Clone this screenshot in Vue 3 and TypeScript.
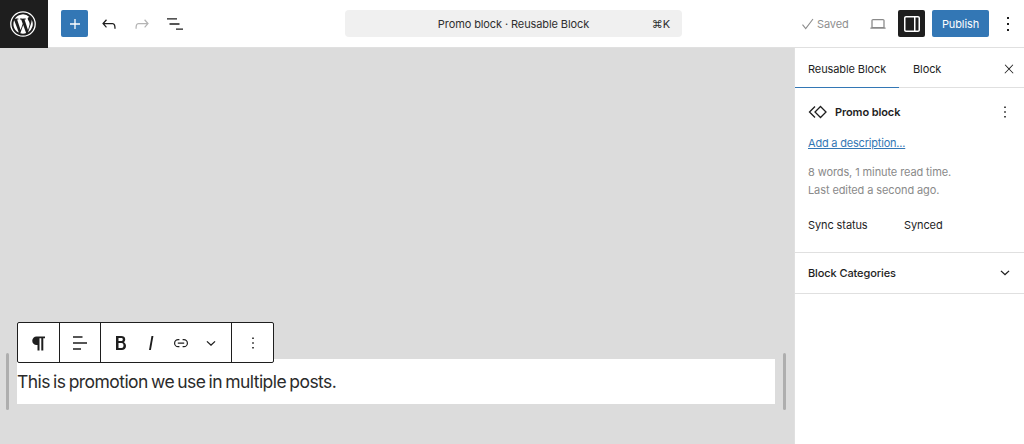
<script setup lang="ts">
const meta: string[] = ['8 words, 1 minute read time.', 'Last edited a second ago.']
</script>

<template>
  <div class="app">
    <header class="top">
      <div class="logo">
        <svg width="28" height="28" viewBox="0 0 28 28">
          <circle cx="14" cy="14" r="12.2" fill="none" stroke="#fff" stroke-width="1.3" />
          <path fill="#fff" d="M4.4 14c0 3.8 2.2 7.1 5.4 8.6L5.2 10.2A9.6 9.6 0 0 0 4.4 14zm16.1-.5c0-1.2-.4-2-.8-2.6-.5-.8-1-1.5-1-2.3 0-.9.7-1.7 1.6-1.7h.1A9.6 9.6 0 0 0 5.9 8.7h.6c1 0 2.6-.1 2.6-.1.5 0 .6.7.1.8 0 0-.5.1-1.1.1l3.5 10.5 2.1-6.3-1.5-4.2c-.5 0-1-.1-1-.1-.5 0-.5-.8.1-.8 0 0 1.6.1 2.6.1s2.6-.1 2.6-.1c.5 0 .6.7.1.8 0 0-.5.1-1.1.1l3.5 10.4 1-3.2c.4-1.3.7-2.3.7-3.1zM14.2 14.9l-2.9 8.4a9.6 9.6 0 0 0 5.9-.2l-.1-.1-2.9-8.1zm8.3-5.5c0 .3.1.7.1 1 0 1-.2 2.1-.7 3.5l-2.9 8.5a9.6 9.6 0 0 0 3.5-13z" />
        </svg>
      </div>
      <div class="tools">
        <button class="add" aria-label="Add block">
          <svg width="24" height="24" viewBox="0 0 24 24"><path fill="#fff" d="M11.35 7h1.3v4.35H17v1.3h-4.35V17h-1.3v-4.35H7v-1.3h4.35z" /></svg>
        </button>
        <span class="tool">
          <svg width="24" height="24" viewBox="0 0 24 24"><path fill="#1e1e1e" transform="translate(1.8 1.8) scale(.85)" d="M18.3 11.7c-.6-.6-1.4-.9-2.3-.9H6.7l2.9-3.3-1.1-1-4.5 5L8.5 16.5l1-1-2.7-3.2H16c.5 0 .9.2 1.3.5 1 1 1 3.4 1 4.5v.3h1.5v-.2c0-1.5 0-4.3-1.5-5.7z" /></svg>
        </span>
        <span class="tool">
          <svg width="24" height="24" viewBox="0 0 24 24"><path fill="#b4b4b4" transform="translate(1.8 1.8) scale(.85)" d="M15.6 6.5l-1.1 1 2.9 3.3H8c-.9 0-1.7.3-2.3.9-1.4 1.5-1.4 4.2-1.4 5.6v.2h1.5v-.3c0-1.1 0-3.5 1-4.5.3-.3.7-.5 1.3-.5h9.2l-2.7 3.2 1 1 4.4-5-4.4-4.9z" /></svg>
        </span>
        <span class="tool">
          <svg width="24" height="24" viewBox="0 0 24 24"><path fill="#1e1e1e" d="M4 6.25h10v1.3H4zM6.5 11.35h10v1.3h-10zM13 16.45h7v1.3h-7z" /></svg>
        </span>
      </div>
      <div class="center">
        <div class="command">
          <span class="cmd-title">Promo block · Reusable Block</span>
          <span class="cmd-key">⌘K</span>
        </div>
      </div>
      <div class="actions">
        <span class="saved">
          <svg width="16" height="16" viewBox="0 0 16 16"><path fill="none" stroke="#8c8c8c" stroke-width="1.1" d="M2.5 8.7l3.2 3.8 7.3-9.5" /></svg>
          Saved
        </span>
        <span class="view">
          <svg width="24" height="24" viewBox="0 0 24 24"><path fill="#8a8a8a" transform="translate(1.8 1.8) scale(.85)" d="M20.5 16h-.7V8c0-1.1-.9-2-2-2H6.2c-1.1 0-2 .9-2 2v8h-.7c-.4 0-.7.3-.7.7s.3.8.7.8h17c.4 0 .7-.3.7-.8s-.3-.7-.7-.7zM5.700 8c0-.3.2-.5.5-.5h11.600c.3 0 .5.2.5.5v7.600H5.700V8z" /></svg>
        </span>
        <button class="panel" aria-label="Settings">
          <svg width="24" height="24" viewBox="0 0 24 24"><path fill="#fff" d="M18 4H6c-1.1 0-2 .9-2 2v12c0 1.1.9 2 2 2h12c1.1 0 2-.9 2-2V6c0-1.1-.9-2-2-2zM5.500 18V6c0-.3.2-.5.5-.5h8v13H6c-.3 0-.5-.2-.5-.5zm13 0c0 .3-.2.5-.5.5h-2.500v-13H18c.3 0 .5.2.5.5v12z" /></svg>
        </button>
        <button class="publish">Publish</button>
        <span class="more">
          <svg width="24" height="24" viewBox="0 0 24 24"><path fill="#1e1e1e" d="M13 19h-2v-2h2zm0-6h-2v-2h2zm0-6h-2V5h2z" /></svg>
        </span>
      </div>
    </header>

    <div class="body">
      <main class="canvas">
        <div class="block-wrap">
          <span class="handle"></span>
          <div class="block">
            <p class="para">This is promotion we use in multiple posts.</p>
            <div class="toolbar">
              <span class="group single">
                <svg width="24" height="24" viewBox="0 0 24 24"><path fill="#1e1e1e" d="M18 5.500H9.500a4.250 4.250 0 0 0 0 8.500h1v5.500h2V7.300h1.800v12.200h2V7.300H18z" /></svg>
              </span>
              <span class="group single">
                <svg width="24" height="24" viewBox="0 0 24 24"><path fill="#1e1e1e" d="M5 5.350h9.500v1.300H5zM5 11.350h14v1.300H5zM5 17.350h8v1.300H5z" /></svg>
              </span>
              <span class="group format">
                <svg width="24" height="24" viewBox="0 0 24 24"><path fill="#1e1e1e" d="M14.700 11.300c1-.6 1.500-1.600 1.500-3 0-2.300-1.700-3.300-4-3.300H7v14h5.800c2.300 0 4.200-1.300 4.200-3.900 0-1.700-.9-3.200-2.300-3.800zM9.500 7h2.500c1.100 0 1.800.4 1.800 1.500S13.100 10 12 10H9.500zm3 10h-3v-5h3c1.300 0 2 .8 2 2.500S13.800 17 12.500 17z" /></svg>
                <svg width="24" height="24" viewBox="0 0 24 24"><path fill="#1e1e1e" d="M12.500 5L10 19h1.900l2.500-14z" /></svg>
                <svg width="24" height="24" viewBox="0 0 24 24"><path fill="#1e1e1e" transform="translate(2.400 2.400) scale(.8)" d="M10 17.389H8.444A5.194 5.194 0 1 1 8.444 7H10v1.500H8.444a3.694 3.694 0 0 0 0 7.389H10zM15.556 7H14v1.500h1.556a3.694 3.694 0 0 1 0 7.389H14v1.500h1.556a5.194 5.194 0 0 0 0-10.389zM8 13h8v-1.500H8z" /></svg>
                <svg width="24" height="24" viewBox="0 0 24 24"><path fill="#1e1e1e" d="M16.500 10.800l-.9-.9-3.600 3.300-3.600-3.300-.9.900 4.500 4.100z" /></svg>
              </span>
              <span class="group last">
                <svg width="24" height="24" viewBox="0 0 24 24"><path fill="#1e1e1e" d="M13 19h-2v-2h2zm0-6h-2v-2h2zm0-6h-2V5h2z" transform="translate(2.400 2.400) scale(.8)" /></svg>
              </span>
            </div>
          </div>
          <span class="handle"></span>
        </div>
      </main>

      <aside class="side">
        <div class="tabs">
          <span class="tab active">Reusable Block</span>
          <span class="tab">Block</span>
          <svg class="close" width="24" height="24" viewBox="0 0 24 24"><path fill="#1e1e1e" transform="translate(4.800 4.800) scale(.6)" d="M13 11.800l6.100-6.300-1-1-6.100 6.200-6.100-6.200-1 1 6.100 6.300-6.500 6.700 1 1 6.500-6.600 6.500 6.600 1-1z" /></svg>
        </div>
        <section class="summary">
          <div class="title-row">
            <svg width="24" height="24" viewBox="0 0 24 24"><path fill="none" stroke="#1e1e1e" stroke-width="1.300" d="M14.500 6.500l5.500 5.500-5.500 5.500L9 12zM9 6.500L3.500 12 9 17.500" /></svg>
            <strong class="title">Promo block</strong>
            <svg class="row-more" width="24" height="24" viewBox="0 0 24 24"><path fill="#1e1e1e" d="M13 19h-2v-2h2zm0-6h-2v-2h2zm0-6h-2V5h2z" transform="translate(2.400 2.400) scale(.8)" /></svg>
          </div>
          <a class="desc">Add a description...</a>
          <div class="meta">
            <div v-for="line in meta" :key="line">{{ line }}</div>
          </div>
          <div class="sync"><span class="sync-label">Sync status</span><span>Synced</span></div>
        </section>
        <section class="cats">
          <span class="cats-title">Block Categories</span>
          <svg width="24" height="24" viewBox="0 0 24 24"><path fill="#1e1e1e" d="M16.500 10.300l-.9-.9-3.600 3.300-3.600-3.300-.9.900 4.500 4.100z" /></svg>
        </section>
      </aside>
    </div>
  </div>
</template>

<style>
html, body { margin: 0; padding: 0; background: #fff; }
</style>

<style scoped>
.app {
  width: 1024px;
  height: 444px;
  display: flex;
  flex-direction: column;
  overflow: hidden;
  font-family: Inter, "Liberation Sans", sans-serif;
  font-size: 11px;
  letter-spacing: -0.1px;
  color: #1e1e1e;
}
svg { display: block; flex: none; }
button { border: 0; padding: 0; font: inherit; letter-spacing: inherit; }

.top {
  height: 48px;
  flex: none;
  box-sizing: border-box;
  display: flex;
  align-items: center;
  background: #fff;
  border-bottom: 1px solid #e0e0e0;
}
.logo {
  width: 48px;
  height: 48px;
  margin-bottom: -1px;
  box-sizing: border-box;
  padding: 0 2px 1px 0;
  background: #1e1e1e;
  display: flex;
  align-items: center;
  justify-content: center;
}
.tools {
  width: 297px;
  flex: none;
  padding-left: 13px;
  box-sizing: border-box;
  display: flex;
  align-items: center;
  gap: 6px;
}
.add {
  width: 27px;
  height: 27px;
  margin-right: 1px;
  background: #3377b5;
  border-radius: 2px;
  display: flex;
  align-items: center;
  justify-content: center;
}
.tool { width: 27px; display: flex; justify-content: center; }

.center { width: 337px; flex: none; }
.command {
  height: 27px;
  background: #f0f0f0;
  border-radius: 4px;
  display: flex;
  align-items: center;
  justify-content: center;
  position: relative;
  color: #2f2f2f;
}
.cmd-key { position: absolute; right: 12px; }

.actions { flex: 1; display: flex; align-items: center; padding-left: 118px; }
.saved { display: flex; align-items: center; gap: 1px; color: #8f8f8f; width: 48px; flex: none; white-space: nowrap; }
.view { margin-left: 18px; width: 24px; flex: none; }
.panel {
  width: 27px;
  height: 27px;
  flex: none;
  margin-left: 8px;
  background: #1e1e1e;
  border-radius: 2px;
  display: flex;
  align-items: center;
  justify-content: center;
}
.publish {
  width: 57px;
  height: 27px;
  flex: none;
  margin-left: 7px;
  background: #3377b5;
  color: #fff;
  border-radius: 2px;
}
.more { margin-left: 7px; flex: none; }

.body { flex: 1; min-height: 0; display: flex; }
.canvas {
  flex: 1;
  min-width: 0;
  background: #dcdcdc;
  display: flex;
  flex-direction: column;
  justify-content: flex-end;
  padding: 0 8px 34px 6px;
}
.block-wrap { display: flex; align-items: center; gap: 8px; }
.handle { width: 3px; height: 57px; background: #aeaeae; border-radius: 2px; flex: none; }
.block { flex: 1; height: 45px; background: #fff; position: relative; display: flex; align-items: center; }
.para {
  margin: 0;
  font-size: 17.5px;
  letter-spacing: -0.55px;
  word-spacing: -1.2px;
  color: #2b2b2b;
}
.toolbar {
  position: absolute;
  left: 0;
  top: -37px;
  height: 39px;
  display: flex;
  background: #fff;
  border: 1px solid #1e1e1e;
  border-radius: 2px;
}
.group {
  display: flex;
  align-items: center;
  justify-content: center;
  border-right: 1px solid #1e1e1e;
  box-sizing: border-box;
  width: 41px;
}
.single:first-child { width: 42px; }
.format { width: 131px; gap: 6px; }
.last { border-right: 0; }

.side {
  width: 230px;
  flex: none;
  box-sizing: border-box;
  background: #fff;
  border-left: 1px solid #e0e0e0;
}
.tabs {
  height: 40px;
  box-sizing: border-box;
  display: flex;
  align-items: center;
  border-bottom: 1px solid #e0e0e0;
}
.tab { height: 39px; display: flex; align-items: center; box-sizing: border-box; padding: 2px 13px 0; position: relative; white-space: nowrap; }
.active { width: 104px; flex: none; }
.active::after { content: ""; position: absolute; left: 0; right: 0; bottom: -1px; height: 1.5px; background: #3377b5; }
.tab:nth-child(2) { padding-left: 14px; }
.close { margin-left: auto; margin-right: 3px; margin-top: 2px; }

.summary { padding: 12px 13px 0; border-bottom: 1px solid #e0e0e0; height: 165px; box-sizing: border-box; }
.title-row { display: flex; align-items: center; height: 24px; gap: 5px; margin-left: -2px; margin-right: -6px; }
.title { font-weight: 600; }
.row-more { margin-left: auto; }
.desc { display: block; margin-top: 10px; color: #3377b5; text-decoration: underline; line-height: 18px; letter-spacing: -0.2px; }
.meta { margin-top: 11px; color: #8a8a8a; line-height: 18px; }
.sync { margin-top: 17px; display: flex; line-height: 18px; }
.sync-label { width: 96px; flex: none; }
.cats {
  height: 41px;
  padding: 0 7px 0 13px;
  display: flex;
  align-items: center;
  justify-content: space-between;
  border-bottom: 1px solid #e0e0e0;
  box-sizing: border-box;
}
.cats-title { font-weight: 500; }
</style>
